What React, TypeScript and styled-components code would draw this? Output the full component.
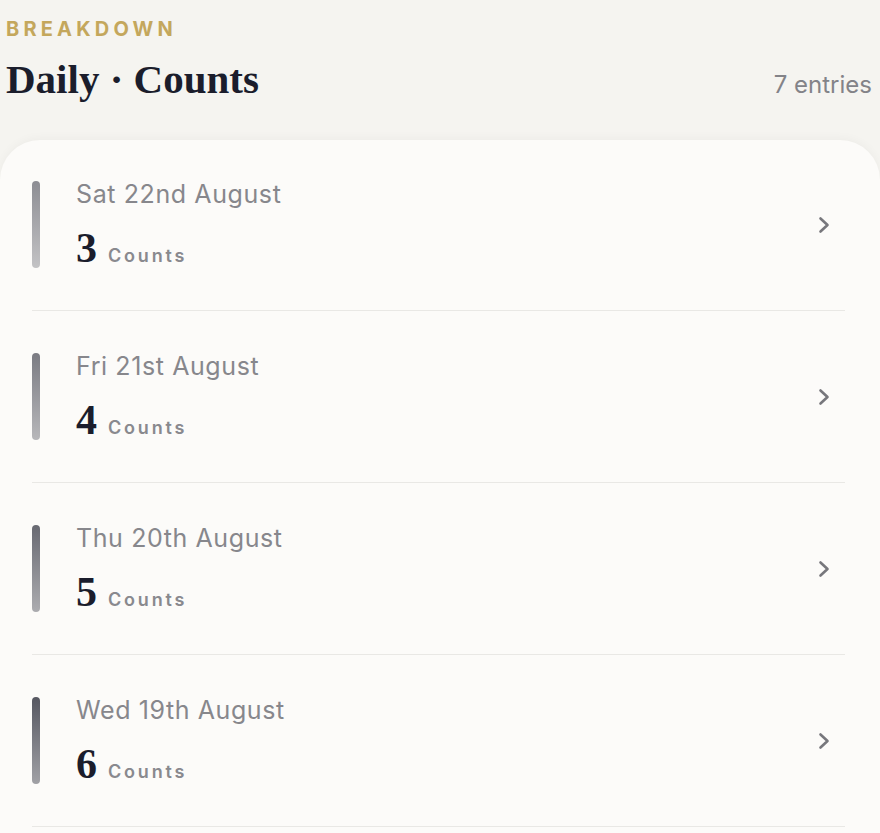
import React from "react";
import styled, { createGlobalStyle } from "styled-components";

const GlobalStyle = createGlobalStyle`
  body {
    margin: 0;
    background: #f5f4f0;
    font-family: Inter, "Open Sans", sans-serif;
  }
`;

const Page = styled.div`
  height: 100vh;
  display: flex;
  flex-direction: column;
  overflow: hidden;
`;

const Header = styled.header`
  display: flex;
  justify-content: space-between;
  align-items: flex-start;
  padding: 17px 8px 0 6px;
  height: 123px;
  box-sizing: border-box;
  flex-shrink: 0;
`;

const TitleBlock = styled.div`
  display: flex;
  flex-direction: column;
`;

const Eyebrow = styled.span`
  font-size: 20px;
  font-weight: 700;
  letter-spacing: 4.2px;
  color: #c4a75c;
  line-height: 24px;
`;

const Title = styled.h1`
  margin: 16px 0 0;
  font-family: "Liberation Serif", serif;
  font-weight: 700;
  font-size: 41px;
  line-height: 44px;
  color: #1b1d2c;
`;

const EntryCount = styled.span`
  margin-top: 54px;
  font-size: 24px;
  line-height: 28px;
  color: #838388;
`;

const Card = styled.section`
  flex: 1;
  margin-top: 17px;
  background: #fcfbf9;
  border-radius: 40px 40px 0 0;
  box-shadow: 0 -2px 10px rgba(0, 0, 0, 0.035);
  padding: 0 35px 0 32px;
`;

const Row = styled.div`
  display: flex;
  align-items: center;
  padding: 41px 0 42px;
  border-bottom: 1.5px solid #e9e8e5;

  & + & {
    padding-top: 42px;
  }
`;

const Bar = styled.div<{ $strength: number }>`
  width: 8px;
  height: 87px;
  border-radius: 4px;
  flex-shrink: 0;
  background: linear-gradient(
    to bottom,
    rgba(30, 32, 46, ${(p) => 0.5 + p.$strength * 0.25}),
    rgba(30, 32, 46, ${(p) => 0.26 + p.$strength * 0.15})
  );
`;

const Info = styled.div`
  flex: 1;
  display: flex;
  flex-direction: column;
  margin-left: 36px;
`;

const DateText = styled.span`
  font-size: 25px;
  line-height: 28px;
  letter-spacing: 0.6px;
  color: #87878c;
  margin-top: -2px;
`;

const CountLine = styled.div`
  display: flex;
  align-items: baseline;
  margin-top: 20px;
`;

const CountNumber = styled.span`
  font-family: "Liberation Serif", serif;
  font-weight: 700;
  font-size: 42px;
  line-height: 40px;
  color: #1b1d2c;
`;

const CountLabel = styled.span`
  margin-left: 11px;
  font-size: 18px;
  font-weight: 600;
  letter-spacing: 2.8px;
  color: #89898e;
`;

const Chevron = styled.svg`
  width: 14px;
  height: 20px;
  flex-shrink: 0;
  margin-right: 14px;
`;

const TOTAL_ENTRIES = 7;

const entries = [
  { date: "Sat 22nd August", count: 3 },
  { date: "Fri 21st August", count: 4 },
  { date: "Thu 20th August", count: 5 },
  { date: "Wed 19th August", count: 6 },
];

const App: React.FC = () => {
  return (
    <Page>
      <GlobalStyle />
      <Header>
        <TitleBlock>
          <Eyebrow>BREAKDOWN</Eyebrow>
          <Title>Daily · Counts</Title>
        </TitleBlock>
        <EntryCount>{TOTAL_ENTRIES} entries</EntryCount>
      </Header>
      <Card>
        {entries.map((entry, i) => (
          <Row key={entry.date}>
            <Bar $strength={i / 3} />
            <Info>
              <DateText>{entry.date}</DateText>
              <CountLine>
                <CountNumber>{entry.count}</CountNumber>
                <CountLabel>Counts</CountLabel>
              </CountLine>
            </Info>
            <Chevron viewBox="0 0 14 20" fill="none">
              <path
                d="M3.5 3.5 L10.5 10 L3.5 16.5"
                stroke="#77777c"
                strokeWidth="2.6"
                strokeLinecap="round"
                strokeLinejoin="round"
              />
            </Chevron>
          </Row>
        ))}
      </Card>
    </Page>
  );
};

export default App;
